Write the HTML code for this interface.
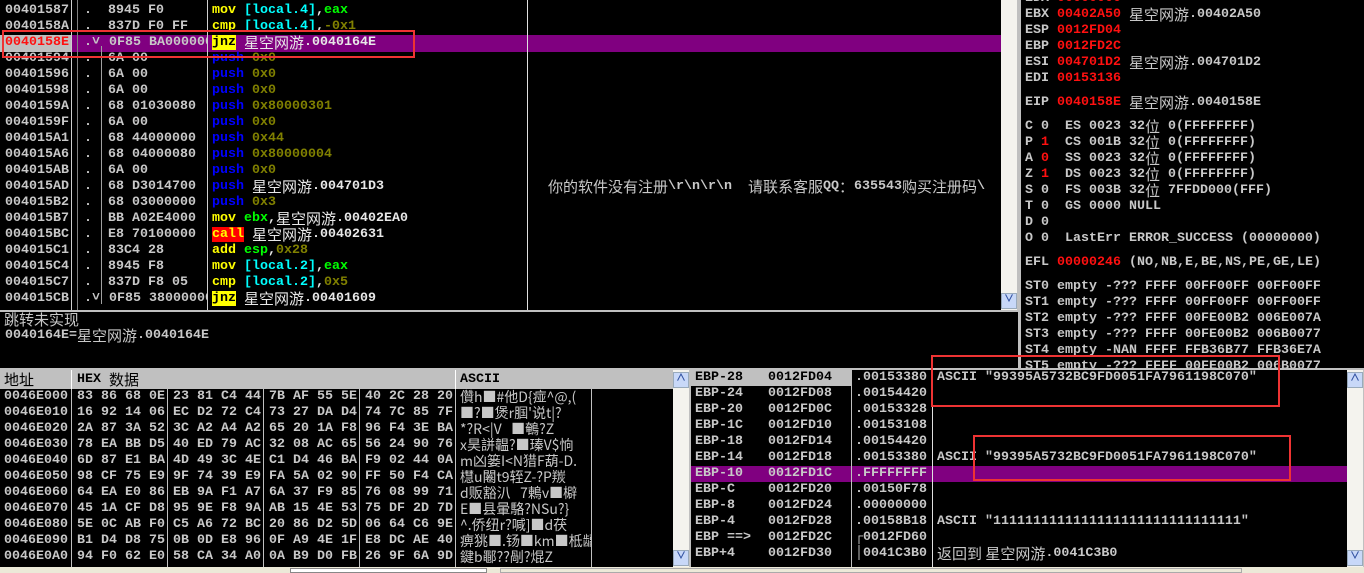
<!DOCTYPE html>
<html><head><meta charset="utf-8">
<style>
*{margin:0;padding:0;box-sizing:border-box}
body{width:1364px;height:573px;overflow:hidden;background:#c0c0c0;position:relative;font-family:"Liberation Mono","Noto Sans CJK SC",monospace;font-size:13.33px;font-weight:bold;color:#c8c8c8}
.p{position:absolute;background:#000;overflow:hidden}
.t{position:absolute;white-space:pre;line-height:16px;height:16px}
.c{font-family:"Noto Sans CJK SC","WenQuanYi Zen Hei",sans-serif;font-weight:normal;font-size:15px;letter-spacing:0;display:inline-block;vertical-align:top;line-height:16px;height:16px;overflow:visible}
.y{color:#ffff00}.cy{color:#00ffff}.g{color:#00ff00}.b{color:#0000ff}.o{color:#808000}.w{color:#e8e8e8}.r{color:#ff1010}
.vl{position:absolute;background:#c0c0c0;width:1px}
.sb{position:absolute;background:#f4f3ee;width:16px}
.btn{position:absolute;width:16px;height:16px;background:#c8d8f8;border:1px solid #9ab;color:#3050a0;font-size:10px;line-height:14px;text-align:center}
.rb{position:absolute;border:2px solid #ee3333}
.ml div{height:16px;line-height:16px;white-space:pre}
</style></head><body>

<!-- Disassembly -->
<div class="p" style="left:0;top:0;width:1001px;height:310px">
  <div style="position:absolute;left:0;top:35px;width:1001px;height:17px;background:#800080"></div>
  <div style="position:absolute;left:0;top:35px;width:71px;height:17px;background:#c0c0c0"></div>
  <div class="vl" style="left:71px;top:0;height:310px;background:#d0d0d0"></div>
  <div class="vl" style="left:77px;top:0;height:310px;background:#808080"></div>
  <div class="vl" style="left:207px;top:0;height:310px;background:#d0d0d0"></div>
  <div class="vl" style="left:101px;top:46px;height:258px;background:#a0a0a0"></div>

  <div class="t" style="left:5px;top:3px">00401587</div>
  <div class="t" style="left:5px;top:19px">0040158A</div>
  <div class="t r" style="left:5px;top:35px">0040158E</div>
  <div class="t" style="left:5px;top:51px">00401594</div>
  <div class="t" style="left:5px;top:67px">00401596</div>
  <div class="t" style="left:5px;top:83px">00401598</div>
  <div class="t" style="left:5px;top:99px">0040159A</div>
  <div class="t" style="left:5px;top:115px">0040159F</div>
  <div class="t" style="left:5px;top:131px">004015A1</div>
  <div class="t" style="left:5px;top:147px">004015A6</div>
  <div class="t" style="left:5px;top:163px">004015AB</div>
  <div class="t" style="left:5px;top:179px">004015AD</div>
  <div class="t" style="left:5px;top:195px">004015B2</div>
  <div class="t" style="left:5px;top:211px">004015B7</div>
  <div class="t" style="left:5px;top:227px">004015BC</div>
  <div class="t" style="left:5px;top:243px">004015C1</div>
  <div class="t" style="left:5px;top:259px">004015C4</div>
  <div class="t" style="left:5px;top:275px">004015C7</div>
  <div class="t" style="left:5px;top:291px">004015CB</div>

  <div class="t" style="left:84px;top:3px">.</div>
  <div class="t" style="left:84px;top:19px">.</div>
  <div class="t" style="left:84px;top:35px">.&#x2c5;</div>
  <div class="t" style="left:84px;top:51px">.</div><div class="t" style="left:84px;top:67px">.</div><div class="t" style="left:84px;top:83px">.</div><div class="t" style="left:84px;top:99px">.</div><div class="t" style="left:84px;top:115px">.</div><div class="t" style="left:84px;top:131px">.</div><div class="t" style="left:84px;top:147px">.</div><div class="t" style="left:84px;top:163px">.</div><div class="t" style="left:84px;top:179px">.</div><div class="t" style="left:84px;top:195px">.</div><div class="t" style="left:84px;top:211px">.</div><div class="t" style="left:84px;top:227px">.</div><div class="t" style="left:84px;top:243px">.</div><div class="t" style="left:84px;top:259px">.</div><div class="t" style="left:84px;top:275px">.</div><div class="t" style="left:84px;top:291px">.&#x2c5;</div>

  <div style="position:absolute;left:108px;top:0;width:99px;height:310px;overflow:hidden">
  <div class="t" style="left:0;top:3px">8945 F0</div>
  <div class="t" style="left:0;top:19px">837D F0 FF</div>
  <div class="t" style="left:1px;top:35px">0F85 BA000000</div>
  <div class="t" style="left:0;top:51px">6A 00</div>
  <div class="t" style="left:0;top:67px">6A 00</div>
  <div class="t" style="left:0;top:83px">6A 00</div>
  <div class="t" style="left:0;top:99px">68 01030080</div>
  <div class="t" style="left:0;top:115px">6A 00</div>
  <div class="t" style="left:0;top:131px">68 44000000</div>
  <div class="t" style="left:0;top:147px">68 04000080</div>
  <div class="t" style="left:0;top:163px">6A 00</div>
  <div class="t" style="left:0;top:179px">68 D3014700</div>
  <div class="t" style="left:0;top:195px">68 03000000</div>
  <div class="t" style="left:0;top:211px">BB A02E4000</div>
  <div class="t" style="left:0;top:227px">E8 70100000</div>
  <div class="t" style="left:0;top:243px">83C4 28</div>
  <div class="t" style="left:0;top:259px">8945 F8</div>
  <div class="t" style="left:0;top:275px">837D F8 05</div>
  <div class="t" style="left:1px;top:291px">0F85 38000000</div>
  </div>

  <div class="t" style="left:212px;top:3px"><span class="y">mov </span><span class="cy">[local.4]</span><span class="w">,</span><span class="g">eax</span></div>
  <div class="t" style="left:212px;top:19px"><span class="y">cmp </span><span class="cy">[local.4]</span><span class="w">,</span><span class="o">-0x1</span></div>
  <div class="t" style="left:212px;top:35px"><span style="background:#ffff00;color:#000">jnz</span><span class="w"> <span class="c">星空网游</span>.0040164E</span></div>
  <div class="t" style="left:212px;top:51px"><span class="b">push </span><span class="o">0x0</span></div>
  <div class="t" style="left:212px;top:67px"><span class="b">push </span><span class="o">0x0</span></div>
  <div class="t" style="left:212px;top:83px"><span class="b">push </span><span class="o">0x0</span></div>
  <div class="t" style="left:212px;top:99px"><span class="b">push </span><span class="o">0x80000301</span></div>
  <div class="t" style="left:212px;top:115px"><span class="b">push </span><span class="o">0x0</span></div>
  <div class="t" style="left:212px;top:131px"><span class="b">push </span><span class="o">0x44</span></div>
  <div class="t" style="left:212px;top:147px"><span class="b">push </span><span class="o">0x80000004</span></div>
  <div class="t" style="left:212px;top:163px"><span class="b">push </span><span class="o">0x0</span></div>
  <div class="t" style="left:212px;top:179px"><span class="b">push </span><span class="w"><span class="c">星空网游</span>.004701D3</span></div>
  <div class="t" style="left:212px;top:195px"><span class="b">push </span><span class="o">0x3</span></div>
  <div class="t" style="left:212px;top:211px"><span class="y">mov </span><span class="g">ebx</span><span class="w">,<span class="c">星空网游</span>.00402EA0</span></div>
  <div class="t" style="left:212px;top:227px"><span style="background:#ff0000;color:#ffff00">call</span><span class="w"> <span class="c">星空网游</span>.00402631</span></div>
  <div class="t" style="left:212px;top:243px"><span class="y">add </span><span class="g">esp</span><span class="w">,</span><span class="o">0x28</span></div>
  <div class="t" style="left:212px;top:259px"><span class="y">mov </span><span class="cy">[local.2]</span><span class="w">,</span><span class="g">eax</span></div>
  <div class="t" style="left:212px;top:275px"><span class="y">cmp </span><span class="cy">[local.2]</span><span class="w">,</span><span class="o">0x5</span></div>
  <div class="t" style="left:212px;top:291px"><span style="background:#ffff00;color:#000">jnz</span><span class="w"> <span class="c">星空网游</span>.00401609</span></div>

  <div class="vl" style="left:527px;top:0;height:310px;background:#e0e0e0"></div>
  <div class="t" style="left:548px;top:179px;color:#c8c8c8"><span class="c">你的软件没有注册</span>\r\n\r\n  <span class="c">请联系客服</span>QQ<span class="c">：</span>635543<span class="c">购买注册码</span>\</div>
</div>
<div class="sb" style="left:1001px;top:0;height:310px"></div>
<div class="btn" style="left:1001px;top:293px">&#x2228;</div>

<!-- Info pane -->
<div class="p" style="left:0;top:312px;width:1018px;height:56px">
  <div class="t" style="left:4px;top:0px;color:#c8c8c8"><span class="c">跳转未实现</span></div>
  <div class="t" style="left:5px;top:16px">0040164E=<span class="c">星空网游</span>.0040164E</div>
</div>

<!-- Registers -->
<div class="p" style="left:1021px;top:0;width:343px;height:368px">
  <div class="t" style="left:4px;top:-9px">EDX <span class="r">00000000</span></div>
  <div class="t" style="left:4px;top:7px">EBX <span class="r">00402A50</span> <span class="c">星空网游</span>.00402A50</div>
  <div class="t" style="left:4px;top:23px">ESP <span class="r">0012FD04</span></div>
  <div class="t" style="left:4px;top:39px">EBP <span class="r">0012FD2C</span></div>
  <div class="t" style="left:4px;top:55px">ESI <span class="r">004701D2</span> <span class="c">星空网游</span>.004701D2</div>
  <div class="t" style="left:4px;top:71px">EDI <span class="r">00153136</span></div>
  <div class="t" style="left:4px;top:95px">EIP <span class="r">0040158E</span> <span class="c">星空网游</span>.0040158E</div>
  <div class="t" style="left:4px;top:119px">C 0  ES 0023 32<span class="c">位</span> 0(FFFFFFFF)</div>
  <div class="t" style="left:4px;top:135px">P <span class="r">1</span>  CS 001B 32<span class="c">位</span> 0(FFFFFFFF)</div>
  <div class="t" style="left:4px;top:151px">A <span class="r">0</span>  SS 0023 32<span class="c">位</span> 0(FFFFFFFF)</div>
  <div class="t" style="left:4px;top:167px">Z <span class="r">1</span>  DS 0023 32<span class="c">位</span> 0(FFFFFFFF)</div>
  <div class="t" style="left:4px;top:183px">S 0  FS 003B 32<span class="c">位</span> 7FFDD000(FFF)</div>
  <div class="t" style="left:4px;top:199px">T 0  GS 0000 NULL</div>
  <div class="t" style="left:4px;top:215px">D 0</div>
  <div class="t" style="left:4px;top:231px">O 0  LastErr ERROR_SUCCESS (00000000)</div>
  <div class="t" style="left:4px;top:255px">EFL <span class="r">00000246</span> (NO,NB,E,BE,NS,PE,GE,LE)</div>
  <div class="t" style="left:4px;top:279px">ST0 empty -??? FFFF 00FF00FF 00FF00FF</div>
  <div class="t" style="left:4px;top:295px">ST1 empty -??? FFFF 00FF00FF 00FF00FF</div>
  <div class="t" style="left:4px;top:311px">ST2 empty -??? FFFF 00FE00B2 006E007A</div>
  <div class="t" style="left:4px;top:327px">ST3 empty -??? FFFF 00FE00B2 006B0077</div>
  <div class="t" style="left:4px;top:343px">ST4 empty -NAN FFFF FFB36B77 FFB36E7A</div>
  <div class="t" style="left:4px;top:359px">ST5 empty -??? FFFF 00FE00B2 006B0077</div>
</div>

<!-- Dump -->
<div class="p" style="left:0;top:370px;width:673px;height:197px">
  <div style="position:absolute;left:0;top:0;width:673px;height:19px;background:#c0c0c0"></div>
  <div class="vl" style="left:71px;top:0;height:19px;background:#fff"></div>
  <div class="vl" style="left:455px;top:0;height:19px;background:#fff"></div>
  <div class="vl" style="left:591px;top:0;height:197px;background:#c0c0c0"></div>
  <div class="t" style="left:4px;top:2px;color:#000"><span class="c">地址</span></div>
  <div class="t" style="left:77px;top:2px;color:#000">HEX <span class="c">数据</span></div>
  <div class="t" style="left:460px;top:2px;color:#000">ASCII</div>
  <div class="vl" style="left:71px;top:19px;height:178px"></div>
  <div class="vl" style="left:167px;top:19px;height:178px"></div>
  <div class="vl" style="left:263px;top:19px;height:178px"></div>
  <div class="vl" style="left:359px;top:19px;height:178px"></div>
  <div class="vl" style="left:455px;top:19px;height:178px"></div>
  <div style="position:absolute;left:4px;top:19px;line-height:16px;white-space:pre">0046E000
0046E010
0046E020
0046E030
0046E040
0046E050
0046E060
0046E070
0046E080
0046E090
0046E0A0</div>
  <div style="position:absolute;left:77px;top:19px;line-height:16px;white-space:pre">83 86 68 0E
16 92 14 06
2A 87 3A 52
78 EA BB D5
6D 87 E1 BA
98 CF 75 E9
64 EA E0 86
45 1A CF D8
5E 0C AB F0
B1 D4 D8 75
94 F0 62 E0</div>
  <div style="position:absolute;left:173px;top:19px;line-height:16px;white-space:pre">23 81 C4 44
EC D2 72 C4
3C A2 A4 A2
40 ED 79 AC
4D 49 3C 4E
9F 74 39 E9
EB 9A F1 A7
95 9E F8 9A
C5 A6 72 BC
0B 0D E8 96
58 CA 34 A0</div>
  <div style="position:absolute;left:269px;top:19px;line-height:16px;white-space:pre">7B AF 55 5E
73 27 DA D4
65 20 1A F8
32 08 AC 65
C1 D4 46 BA
FA 5A 02 90
6A 37 F9 85
AB 15 4E 53
20 86 D2 5D
0F A9 4E 1F
0A B9 D0 FB</div>
  <div style="position:absolute;left:365px;top:19px;line-height:16px;white-space:pre">40 2C 28 20
74 7C 85 7F
96 F4 3E BA
56 24 90 76
F9 02 44 0A
FF 50 F4 CA
76 08 99 71
75 DF 2D 7D
06 64 C6 9E
E8 DC AE 40
26 9F 6A 9D</div>
  <div class="ml" style="position:absolute;left:460px;top:19px;width:131px;overflow:hidden;font-family:'Noto Sans CJK SC',monospace;font-weight:normal;font-size:14px">
<div>儹h■#他D{痖^@,(</div>
<div>■?■煲r腘'说t|?</div>
<div>*?R&lt;|V   ■鵪?Ζ</div>
<div>x昊誁韞?■瑧V$恦</div>
<div>m凶篓I&lt;N猎F葫-D.</div>
<div>櫘u闂t9轾Z-?P羰</div>
<div>d贩豁汃   7鶇v■檘</div>
<div>E■县暈駱?NSu?}</div>
<div>^.侨纽r?喊]■d茯</div>
<div>痹狣■.钖■km■柢龋</div>
<div>鍵b鄳??剮?焜Ζ</div>
  </div>
</div>
<div class="sb" style="left:673px;top:370px;height:197px"></div>
<div class="btn" style="left:673px;top:372px">&#x2227;</div>
<div class="btn" style="left:673px;top:550px">&#x2228;</div>

<!-- Stack -->
<div class="p" style="left:691px;top:370px;width:656px;height:197px">
  <div style="position:absolute;left:0;top:0;width:160px;height:16px;background:#c0c0c0"></div>
  <div style="position:absolute;left:0;top:96px;width:656px;height:16px;background:#800080"></div>
  <div class="vl" style="left:160px;top:0;height:197px;background:#c0c0c0"></div>
  <div class="vl" style="left:241px;top:0;height:197px;background:#e0e0e0"></div>
  <div style="position:absolute;left:4px;top:0;line-height:16px;white-space:pre"><span style="color:#000">EBP-28</span>
EBP-24
EBP-20
EBP-1C
EBP-18
EBP-14
EBP-10
EBP-C
EBP-8
EBP-4
EBP ==&gt;
EBP+4</div>
  <div style="position:absolute;left:77px;top:0;line-height:16px;white-space:pre"><span style="color:#000">0012FD04</span>
0012FD08
0012FD0C
0012FD10
0012FD14
0012FD18
0012FD1C
0012FD20
0012FD24
0012FD28
0012FD2C
0012FD30</div>
  <div style="position:absolute;left:164px;top:0;line-height:16px;white-space:pre">.00153380
.00154420
.00153328
.00153108
.00154420
.00153380
.FFFFFFFF
.00150F78
.00000000
.00158B18
┌0012FD60
│0041C3B0</div>
  <div class="t" style="left:246px;top:0">ASCII "99395A5732BC9FD0051FA7961198C070"</div>
  <div class="t" style="left:246px;top:80px">ASCII "99395A5732BC9FD0051FA7961198C070"</div>
  <div class="t" style="left:246px;top:144px">ASCII "1111111111111111111111111111111"</div>
  <div class="t" style="left:246px;top:176px"><span class="c">返回到 星空网游</span>.0041C3B0</div>
</div>
<div class="sb" style="left:1347px;top:370px;height:197px"></div>
<div class="btn" style="left:1347px;top:372px">&#x2227;</div>
<div class="btn" style="left:1347px;top:550px">&#x2228;</div>

<!-- bottom strip -->
<div style="position:absolute;left:0;top:567px;width:1364px;height:6px;background:#ece9d8"></div>
<div style="position:absolute;left:290px;top:568px;width:197px;height:5px;background:#fff;border:1px solid #888"></div>
<div style="position:absolute;left:500px;top:568px;width:742px;height:5px;border:1px solid #aaa"></div>

<!-- red boxes -->
<div class="rb" style="left:2px;top:30px;width:413px;height:28px"></div>
<div class="rb" style="left:931px;top:355px;width:349px;height:52px"></div>
<div class="rb" style="left:973px;top:435px;width:318px;height:46px"></div>
</body></html>
